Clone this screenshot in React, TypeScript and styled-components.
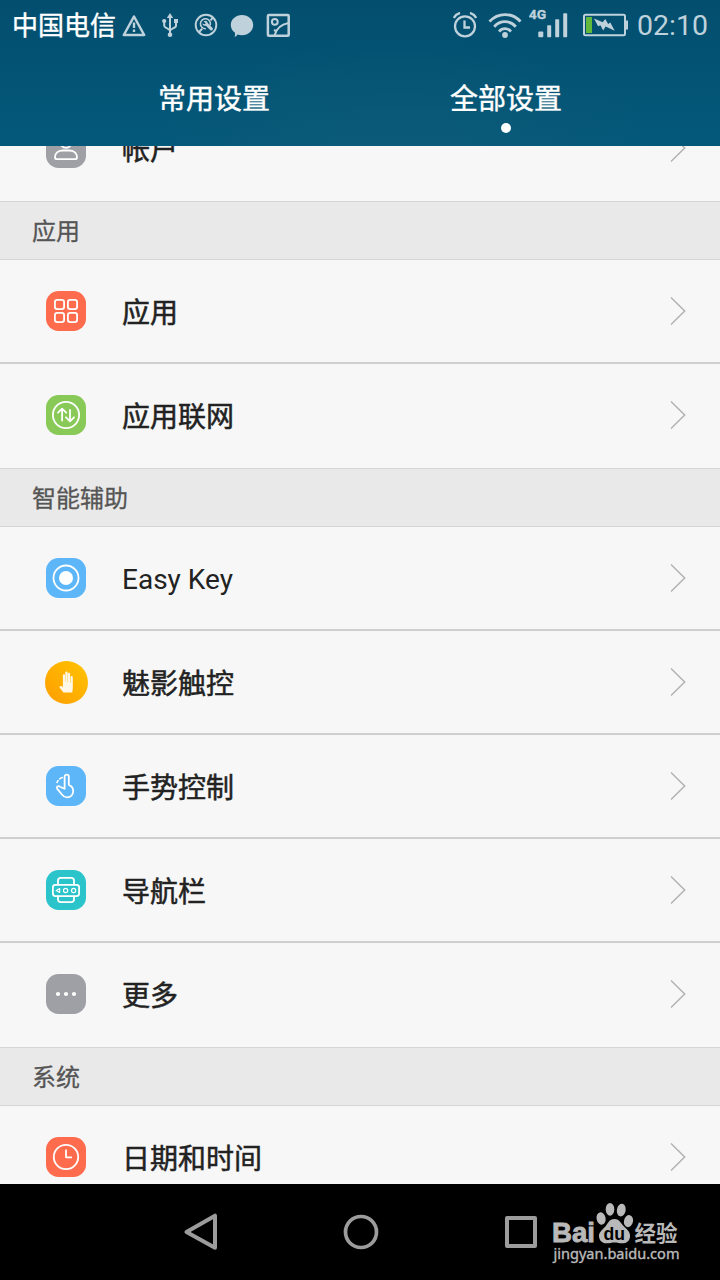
import React from "react";
import styled, { createGlobalStyle } from "styled-components";

const GlobalStyle = createGlobalStyle`
  * { box-sizing: border-box; }
  body {
    margin: 0;
    background: #000;
    font-family: Roboto, "Noto Sans CJK SC", sans-serif;
  }
  svg { display: block; flex: none; }
`;

const Screen = styled.div`
  width: 720px;
  height: 1280px;
  display: flex;
  flex-direction: column;
  overflow: hidden;
`;

const Header = styled.header`
  height: 146px;
  flex: none;
  display: flex;
  flex-direction: column;
  background: radial-gradient(ellipse 260px 120px at 400px 160px, rgba(22, 92, 120, 0.5), transparent),
    linear-gradient(#034e6f, #04597a);
`;

const StatusBar = styled.div`
  height: 50px;
  display: flex;
  align-items: center;
  padding: 0 12px 0 12px;
  color: #bfd2db;
`;

const Carrier = styled.span`
  font-size: 26px;
  line-height: 50px;
  padding-top: 2px;
  width: 104px;
  margin-right: 6px;
  color: #fff;
  white-space: nowrap;
  -webkit-text-stroke: 0.4px currentColor;
`;

const Notifications = styled.div`
  display: flex;
  align-items: center;
  gap: 12px;
  flex: 1;
`;

const SystemStatus = styled.div`
  display: flex;
  align-items: center;
`;

const StatusSlot = styled.div<{ $gap: number }>`
  margin-right: ${(p) => p.$gap}px;
`;

const Clock = styled.span`
  width: 71px;
  font-size: 28.5px;
  line-height: 50px;
  padding-top: 2px;
`;

const Tabs = styled.nav`
  display: flex;
  flex: 1;
  padding: 0 68px;
`;

const Tab = styled.div`
  flex: 1;
  display: flex;
  flex-direction: column;
  align-items: center;
  padding-top: 30px;
  font-size: 28px;
  line-height: 40px;
  color: #fff;
  -webkit-text-stroke: 0.4px currentColor;
`;

const TabDot = styled.i`
  width: 10px;
  height: 10px;
  margin-top: 3px;
  border-radius: 50%;
  background: #fff;
`;

const Viewport = styled.main`
  height: 1038px;
  flex: none;
  overflow: hidden;
  background: #f7f7f7;
`;

const SettingsList = styled.div`
  margin-top: -49px;
`;

const SectionTitle = styled.h2`
  margin: 0;
  height: 59px;
  padding: 2px 0 0 32px;
  border: solid #d6d6d6;
  border-width: 1px 0;
  background: #e9e9e9;
  color: #555;
  font-size: 24px;
  font-weight: 400;
  line-height: 57px;
  -webkit-text-stroke: 0.3px currentColor;
`;

const Row = styled.div<{ $last?: boolean }>`
  height: 104px;
  display: flex;
  align-items: center;
  padding: 0 33px 0 45px;
  border-bottom: 2px solid ${(p) => (p.$last ? "transparent" : "#cfcfcf")};
`;

const IconCell = styled.div`
  width: 77px;
  flex: none;
`;

const Label = styled.span<{ $latin: boolean }>`
  flex: 1;
  font-size: 28px;
  line-height: 40px;
  padding-top: ${(p) => (p.$latin ? 3 : 5)}px;
  color: #222;
  -webkit-text-stroke: ${(p) => (p.$latin ? 0 : 0.5)}px currentColor;
`;

const NavBar = styled.footer`
  position: relative;
  height: 96px;
  flex: none;
  display: flex;
  align-items: center;
  gap: 120px;
  padding-left: 181px;
  background: #000;
`;

const Watermark = styled.div`
  position: absolute;
  left: 548px;
  top: 14px;
`;

const Chevron = () => (
  <svg width="18" height="30" viewBox="0 0 18 30" fill="none" stroke="#b2b2b2" strokeWidth="1.5">
    <path d="M2 1.5 15.7 15 2 28.5" />
  </svg>
);

type TileProps = { color: string; children: React.ReactNode };

const Tile = ({ color, children }: TileProps) => (
  <svg width="44" height="44" viewBox="-1 -2 44 44" fill="none" stroke="#fff" strokeWidth="1.8" strokeLinecap="round" strokeLinejoin="round">
    <rect width="40" height="40" rx="12.5" fill={color} stroke="none" />
    {children}
  </svg>
);

const AccountIcon = () => (
  <Tile color="#9f9fa6">
    <circle cx="20" cy="14" r="5.8" />
    <path d="M11 31.2c-1.300 0-2-.8-2-2 0-4.200 3.500-6.700 8-6.700h6c4.500 0 8 2.500 8 6.700 0 1.200-.7 2-2 2z" />
  </Tile>
);

const AppsIcon = () => (
  <Tile color="#ff6b4d">
    <rect x="8.900" y="8.900" width="9.200" height="9.200" rx="2.300" />
    <rect x="21.900" y="8.900" width="9.200" height="9.200" rx="2.300" />
    <rect x="8.900" y="21.900" width="9.200" height="9.200" rx="2.300" />
    <rect x="21.900" y="21.900" width="9.200" height="9.200" rx="2.300" />
  </Tile>
);

const NetworkIcon = () => (
  <Tile color="#88c957">
    <circle cx="20" cy="20" r="13.100" />
    <path d="M16.100 25.500V14M12 17.700l4.100-4.100 4.100 4.100M24 15v11M20 22.300l4 4 4-4" />
  </Tile>
);

const EasyKeyIcon = () => (
  <Tile color="#5cb6f7">
    <circle cx="20" cy="20" r="12.500" />
    <circle cx="20" cy="20" r="7" fill="#fff" stroke="none" />
  </Tile>
);

const TouchIcon = () => (
  <svg width="44" height="44" viewBox="0 0 44 44">
    <defs>
      <linearGradient id="touch" x1="1" y1="0" x2="0" y2="1">
        <stop offset="0" stopColor="#ffc400" />
        <stop offset="1" stopColor="#ff9d00" />
      </linearGradient>
    </defs>
    <circle cx="21.500" cy="22.500" r="21.500" fill="url(#touch)" />
    <path
      d="M18.500 32.500c-1.300-1.300-2.300-3-3.600-4.500-1-1.400.1-2.600 1.500-1.900l1.500 1.100V15.300c0-1.500 2-1.500 2.100 0V22h.3v-9.400c0-1.500 2.300-1.500 2.300 0V22h.3v-8.200c0-1.500 2.200-1.500 2.200 0V23h.4v-5.800c0-1.500 2.300-1.500 2.300 0v10.300c0 2.300-.5 3.300-.5 5z"
      fill="#fff8e8"
    />
  </svg>
);

const GestureIcon = () => (
  <Tile color="#5cb6f7">
    <path d="M18.600 22.800V10.600c0-2.600 4.200-2.600 4.200 0v8.200c3 1.200 4.400 3.500 4.400 6.200 0 3.700-2.700 6.300-6.200 6.300-2.100 0-3.600-.9-4.900-2.500l-4.800-5.900c-1.400-2 1-3.600 2.700-2.200z" />
    <path d="M11 16.500c.3-.8.6-1.400 1.100-2M13.700 12.900c.9-.7 1.600-1.100 2.600-1.300" strokeWidth="1.500" />
  </Tile>
);

const NavigationIcon = () => (
  <Tile color="#2cc4cb">
    <rect x="6.900" y="14.900" width="26.200" height="11.200" rx="2.500" />
    <path d="M12 14.500v-3.800c0-1.800 1-2.800 2.800-2.800h10.400c1.800 0 2.800 1 2.800 2.800v3.800M12 26.500v2.800c0 1.800 1 2.800 2.800 2.800h10.400c1.800 0 2.800-1 2.800-2.800v-2.800" />
    <path d="m13.700 18.500-3.500 2 3.500 2z" strokeWidth="1.100" />
    <circle cx="19.600" cy="20.500" r="2.100" strokeWidth="1.200" />
    <circle cx="27.600" cy="20.500" r="2.100" strokeWidth="1.200" />
  </Tile>
);

const MoreIcon = () => (
  <Tile color="#9f9fa6">
    <g fill="#fff" stroke="none">
      <circle cx="12" cy="20" r="2.100" />
      <circle cx="20" cy="20" r="2.100" />
      <circle cx="28" cy="20" r="2.100" />
    </g>
  </Tile>
);

const DateIcon = () => (
  <Tile color="#ff6b4d">
    <circle cx="20" cy="20" r="12.200" />
    <path d="M20 12.500v7.800h6" strokeLinecap="butt" />
  </Tile>
);

const WarningIcon = () => (
  <svg width="24" height="26" viewBox="0 0 24 26" fill="none" stroke="currentColor" strokeLinejoin="round">
    <path d="M12 4.500 22.200 23H1.800z" strokeWidth="2.500" />
    <path d="M12 10.500v5.500M12 17.500v2.500" strokeWidth="2.400" />
  </svg>
);

const UsbIcon = () => (
  <svg width="24" height="26" viewBox="0 0 24 26" fill="none" stroke="currentColor" strokeWidth="2">
    <path d="M12 5v18M6.200 9.500v4.300c0 2.600 5.800 2.700 5.800 5.200M18 8.500v5.300c0 2.600-6 2.700-6 5.200" />
    <path d="m12 1 3.200 5H8.800z" fill="currentColor" stroke="none" />
    <circle cx="12" cy="22.700" r="2.300" fill="currentColor" stroke="none" />
    <circle cx="6.200" cy="9" r="2.100" fill="currentColor" stroke="none" />
    <path d="M16 7h4v4h-4z" fill="currentColor" stroke="none" />
  </svg>
);

const ServiceIcon = () => (
  <svg width="24" height="26" viewBox="0 0 24 26" fill="none" stroke="currentColor">
    <circle cx="12" cy="13" r="10.300" strokeWidth="1.900" />
    <path d="M16.200 13.200a5 5 0 1 0-4.400 3.500" strokeWidth="1.600" />
    <path d="m12.800 12.300 4.500 4.600" strokeWidth="3.200" strokeLinecap="round" />
    <path d="M9.500 9.500c1.500-1.300 3.600-.7 4.100 1.200.4 2-1.300 3.500-3.200 3.100-1.100-.3-1.900-1.200-2-2.300l2.400.8 1.200-1z" fill="currentColor" stroke="none" />
    <path d="m5.200 19.800 3-3M16.500 8.200l2.600-2.600" strokeWidth="2" />
  </svg>
);

const ChatIcon = () => (
  <svg width="24" height="26" viewBox="0 0 24 26" fill="currentColor">
    <path d="M12 3c6.300 0 11.200 4.400 11.200 10S18.300 23.200 12 23.200c-1.600 0-3.100-.3-4.400-.8-.9 1.300-1.400 2-3 2.400.4-1.300.6-2.600.4-4.100C2.500 19 .8 16.200.8 13 .8 7.400 5.700 3 12 3z" />
  </svg>
);

const PictureIcon = () => (
  <svg width="24" height="26" viewBox="0 0 24 26" fill="none" stroke="currentColor" strokeWidth="2">
    <rect x="1.900" y="3" width="20.800" height="20.800" rx="1" strokeWidth="2.500" />
    <circle cx="8.800" cy="9.800" r="2.900" />
    <path d="M8.500 23.500c1.500-6 6-11 14-12.500M8 18l2.800 1.500" />
  </svg>
);

const AlarmIcon = () => (
  <svg width="24" height="28" viewBox="0 0 24 28" fill="none" stroke="currentColor">
    <circle cx="12" cy="15.300" r="10" strokeWidth="2.300" />
    <path d="M11.500 9.500v7H17" strokeWidth="2.300" />
    <path d="M.8 7C2 4.600 4.300 2.800 7 1.900M23.200 7C22 4.600 19.700 2.800 17 1.900" strokeWidth="2.300" />
  </svg>
);

const WifiIcon = () => (
  <svg width="34" height="28" viewBox="0 0 34 28" fill="none" stroke="currentColor" strokeWidth="2.800">
    <path d="M1.500 10.500c8.500-9.300 22.500-9.300 31 0M6.200 15.700c6-6.700 15.600-6.700 21.600 0M11 20.500c3.500-3.800 8.500-3.800 12 0" />
    <circle cx="17" cy="24" r="2.900" fill="currentColor" stroke="none" />
  </svg>
);

const SignalIcon = () => (
  <svg width="40" height="36" viewBox="0 0 40 36" fill="currentColor">
    <text x="-.3" y="12.200" fontSize="13.500" fontWeight="700" fontFamily="Roboto" stroke="currentColor" strokeWidth=".3" textLength="17.500" lengthAdjust="spacingAndGlyphs">
      4G
    </text>
    <rect x="9.300" y="24.500" width="5" height="5.700" rx="1" />
    <rect x="18.200" y="18.200" width="4" height="12" rx=".8" />
    <rect x="26.200" y="12.200" width="4" height="18" rx=".8" />
    <rect x="34.200" y="6.200" width="4" height="24" rx=".8" />
  </svg>
);

const BatteryIcon = () => (
  <svg width="46" height="24" viewBox="0 0 46 24">
    <rect x="1" y="1.800" width="41" height="20.400" rx="1.500" fill="none" stroke="currentColor" strokeWidth="2" />
    <path d="M43 7.500h2v9h-2z" fill="currentColor" />
    <rect x="3" y="4" width="6" height="16" fill="#62b83c" />
    <path d="m11 5.500 8.700 3.700 2.600-3.200 2.800 5 2.200-1.500 4.400 8.300-9.100-4.300-2.400 4-2.800-5.300-2.300 1z" fill="currentColor" />
  </svg>
);

const BackIcon = () => (
  <svg width="40" height="40" viewBox="0 0 40 40" fill="none" stroke="#9c9c9c" strokeWidth="4" strokeLinejoin="round">
    <path d="M34 3.700v32L5.500 20z" />
  </svg>
);

const HomeIcon = () => (
  <svg width="40" height="40" viewBox="0 0 40 40" fill="none" stroke="#9c9c9c" strokeWidth="3.700">
    <circle cx="20" cy="20" r="15.500" />
  </svg>
);

const RecentIcon = () => (
  <svg width="40" height="40" viewBox="0 0 40 40" fill="none" stroke="#9c9c9c" strokeWidth="4" strokeLinejoin="round">
    <rect x="6" y="6" width="28" height="28" />
  </svg>
);

const BrandLogo = () => (
  <svg width="140" height="70" viewBox="548 1198 140 70" fill="#b9b9b9">
    <text x="552" y="1241.700" fontFamily="Liberation Sans" fontWeight="700" fontSize="28" stroke="#b9b9b9" strokeWidth=".9" textLength="43" lengthAdjust="spacingAndGlyphs">
      Bai
    </text>
    <ellipse cx="601" cy="1218.500" rx="4.500" ry="6.200" transform="rotate(-12 601 1218)" />
    <ellipse cx="610" cy="1209.300" rx="4.300" ry="6.400" />
    <ellipse cx="621.300" cy="1210" rx="4.400" ry="6.400" transform="rotate(10 621 1210)" />
    <ellipse cx="628.500" cy="1221" rx="4.500" ry="6.100" transform="rotate(12 628 1221)" />
    <path d="M614.500 1219c5.500 0 6.500 5 10 8 4 3.500 6 6 5.500 10-.7 4.500-3.800 6.300-7.500 6.300-3 0-5-.8-8-.8s-5 .8-8 .8c-4 0-7-2.200-7.500-6.800-.3-4 3-6.500 6-9.500 3-3.500 4-8 9.500-8z" />
    <text x="603.500" y="1240" fontFamily="Liberation Sans" fontWeight="700" fontSize="18" fill="#000" textLength="21.500" lengthAdjust="spacingAndGlyphs">
      du
    </text>
    <text x="634.500" y="1240.500" fontFamily="Noto Sans CJK SC" fontWeight="700" fontSize="21.500">
      经验
    </text>
    <text x="553.500" y="1259" fontFamily="Noto Sans" fontSize="14.500" stroke="#b9b9b9" strokeWidth=".4" textLength="126" lengthAdjust="spacingAndGlyphs">
      jingyan.baidu.com
    </text>
  </svg>
);

type Item = { label: string; icon: React.ReactNode; latin?: boolean };
type Section = { title?: string; items: Item[] };

const sections: Section[] = [
  { items: [{ label: "帐户", icon: <AccountIcon /> }] },
  {
    title: "应用",
    items: [
      { label: "应用", icon: <AppsIcon /> },
      { label: "应用联网", icon: <NetworkIcon /> },
    ],
  },
  {
    title: "智能辅助",
    items: [
      { label: "Easy Key", icon: <EasyKeyIcon />, latin: true },
      { label: "魅影触控", icon: <TouchIcon /> },
      { label: "手势控制", icon: <GestureIcon /> },
      { label: "导航栏", icon: <NavigationIcon /> },
      { label: "更多", icon: <MoreIcon /> },
    ],
  },
  { title: "系统", items: [{ label: "日期和时间", icon: <DateIcon /> }] },
];

export default function App() {
  return (
    <Screen>
      <GlobalStyle />
      <Header>
        <StatusBar>
          <Carrier>中国电信</Carrier>
          <Notifications>
            <WarningIcon />
            <UsbIcon />
            <ServiceIcon />
            <ChatIcon />
            <PictureIcon />
          </Notifications>
          <SystemStatus>
            <StatusSlot $gap={11}><AlarmIcon /></StatusSlot>
            <StatusSlot $gap={7}><WifiIcon /></StatusSlot>
            <StatusSlot $gap={14}><SignalIcon /></StatusSlot>
            <StatusSlot $gap={8}><BatteryIcon /></StatusSlot>
            <Clock>02:10</Clock>
          </SystemStatus>
        </StatusBar>
        <Tabs>
          <Tab>常用设置</Tab>
          <Tab>
            全部设置
            <TabDot />
          </Tab>
        </Tabs>
      </Header>
      <Viewport>
        <SettingsList>
          {sections.map((section, s) => (
            <section key={s}>
              {section.title && <SectionTitle>{section.title}</SectionTitle>}
              {section.items.map((item, i) => (
                <Row key={item.label} $last={i === section.items.length - 1}>
                  <IconCell>{item.icon}</IconCell>
                  <Label $latin={!!item.latin}>{item.label}</Label>
                  <Chevron />
                </Row>
              ))}
            </section>
          ))}
        </SettingsList>
      </Viewport>
      <NavBar>
        <BackIcon />
        <HomeIcon />
        <RecentIcon />
        <Watermark>
          <BrandLogo />
        </Watermark>
      </NavBar>
    </Screen>
  );
}
